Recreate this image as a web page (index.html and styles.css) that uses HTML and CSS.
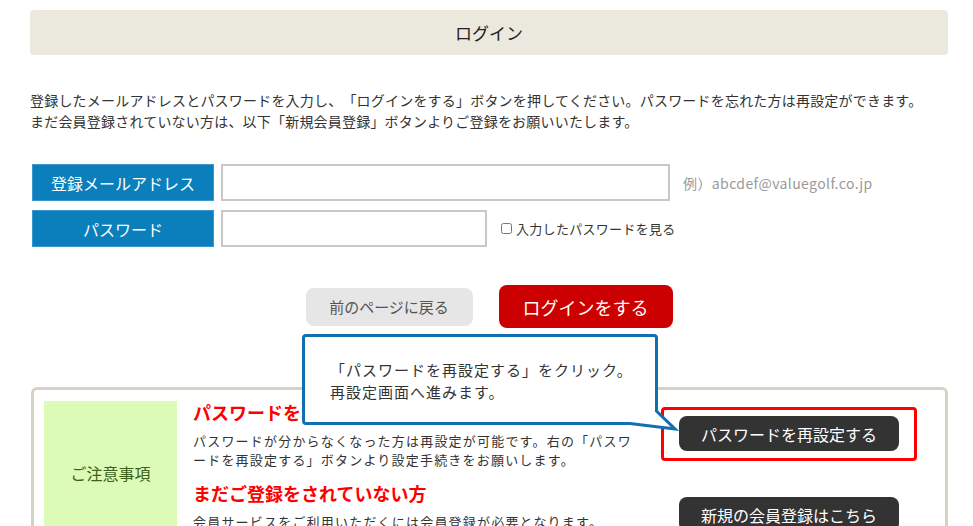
FILE: index.html
```html
<!DOCTYPE html>
<html>
  <head>
    <meta charset="utf-8">
    <title>ログイン</title>
    <link rel="stylesheet" href="styles.css">
  </head>
  <body>
    <div class="page">
      <h1 class="title">ログイン</h1>
      <p class="intro">
        登録したメールアドレスとパスワードを入力し、「ログインをする」ボタンを押してください。パスワードを忘れた方は再設定ができます。<br>
        まだ会員登録されていない方は、以下「新規会員登録」ボタンよりご登録をお願いいたします。
      </p>
      <form class="login">
        <div class="row">
          <label class="label">登録メールアドレス</label>
          <input class="field field-mail" type="text">
          <span class="hint">例）abcdef@valuegolf.co.jp</span>
        </div>
        <div class="row">
          <label class="label">パスワード</label>
          <input class="field field-pass" type="password">
          <label class="show"><input type="checkbox">入力したパスワードを見る</label>
        </div>
        <div class="actions">
          <button type="button" class="btn-back">前のページに戻る</button>
          <button type="button" class="btn-login">ログインをする</button>
        </div>
      </form>
      <div class="notice">
        <div class="notice-title">ご注意事項</div>
        <div class="notice-main">
          <div class="sec">
            <div class="sec-text">
              <h2>パスワードをお忘れの方</h2>
              <p>パスワードが分からなくなった方は再設定が可能です。右の「パスワードを再設定する」ボタンより設定手続きをお願いします。</p>
            </div>
            <div class="frame frame-hl">
              <button type="button" class="btn-dark">パスワードを再設定する</button>
            </div>
          </div>
          <div class="sec">
            <div class="sec-text">
              <h2>まだご登録をされていない方</h2>
              <p>会員サービスをご利用いただくには会員登録が必要となります。</p>
            </div>
            <div class="frame">
              <button type="button" class="btn-dark">新規の会員登録はこちら</button>
            </div>
          </div>
        </div>
      </div>
      <div class="callout">
        「パスワードを再設定する」をクリック。<br>
        再設定画面へ進みます。
        <svg class="callout-tail" width="50" height="32" viewBox="0 0 50 32">
          <polygon points="0,0 26.5,0 26.5,11 45,29 0,23.5" fill="#fff"/>
          <polyline points="26.5,0 26.5,11 45,29 0,23.5" fill="none" stroke="#1170b0" stroke-width="3"/>
        </svg>
      </div>
    </div>
  </body>
</html>
```

FILE: styles.css
```css
body {
  margin: 0;
  background: #fff;
  color: #333;
  font-family: "Noto Sans CJK JP", "Noto Sans", sans-serif;
  text-spacing-trim: space-all;
}

.page {
  position: relative;
  margin: 10px 25px 0 30px;
}

.title {
  margin: 0;
  height: 45px;
  line-height: 45px;
  background: #ebe8dd;
  border-radius: 4px;
  text-align: center;
  font-size: 17px;
  font-weight: normal;
  color: #222;
}

.intro {
  margin: 35px 0 0;
  font-size: 14px;
  line-height: 21px;
  letter-spacing: 0.2px;
}

.login {
  margin-top: 32px;
}

.row {
  display: flex;
  align-items: center;
  height: 37px;
}

.row + .row {
  margin-top: 9px;
}

.label {
  box-sizing: border-box;
  width: 182px;
  height: 37px;
  margin-left: 2px;
  display: flex;
  align-items: center;
  justify-content: center;
  background: #0a7fbb;
  border: 1px solid #3a98cc;
  color: #fff;
  font-size: 16px;
}

.field {
  box-sizing: border-box;
  height: 37px;
  margin: 0 0 0 7px;
  padding: 0 8px;
  border: 2px solid #c8c8c8;
  font-size: 14px;
}

.field-mail {
  width: 449px;
}

.field-pass {
  width: 266px;
}

.hint {
  margin-left: 13px;
  color: #999;
  font-size: 14px;
  letter-spacing: 0.4px;
}

.show {
  margin-left: 14px;
  display: flex;
  align-items: center;
  font-size: 13px;
  letter-spacing: 0.3px;
}

.show input {
  width: 11px;
  height: 11px;
  margin: 0 4px 0 0;
}

.actions {
  margin-top: 38px;
  display: flex;
  align-items: center;
  justify-content: center;
  gap: 26px;
}

.btn-back, .btn-login, .btn-dark {
  border: 0;
  border-radius: 8px;
  font-family: inherit;
  padding: 0;
}

.btn-back {
  width: 167px;
  height: 38px;
  background: #e6e6e6;
  color: #555;
  font-size: 15px;
}

.btn-login {
  width: 174px;
  height: 43px;
  background: #cc0000;
  color: #fff;
  font-size: 18px;
}

.notice {
  margin: 59px 0 0 1px;
  padding: 11px 28px 11px 10px;
  display: flex;
  gap: 16px;
  border: 3px solid #d8d2c4;
  border-radius: 6px;
}

.notice-title {
  width: 133px;
  min-height: 144px;
  flex-shrink: 0;
  display: flex;
  align-items: center;
  justify-content: center;
  background: #dbfbb6;
  color: #3f5f1c;
  font-size: 16px;
}

.notice-main {
  flex: 1;
  display: flex;
  flex-direction: column;
  gap: 13.5px;
}

.sec {
  display: flex;
  justify-content: space-between;
  align-items: flex-start;
}

.sec-text {
  width: 440px;
}

.sec h2 {
  margin: 0;
  font-size: 18px;
  line-height: 22px;
  color: #ff0000;
}

.sec p {
  margin: 7.5px 0 0;
  font-size: 13px;
  line-height: 19px;
  letter-spacing: 1.2px;
}

.frame {
  margin-top: 6px;
  padding: 6px 15px 7px;
  border: 3px solid transparent;
  border-radius: 4px;
}

.frame-hl {
  border-color: #ff0000;
}

.btn-dark {
  width: 220px;
  height: 35px;
  background: #333;
  color: #fff;
  font-size: 16px;
}

.callout {
  position: absolute;
  left: 272px;
  top: 324px;
  z-index: 2;
  box-sizing: border-box;
  width: 356px;
  height: 91px;
  padding: 22px 0 0 25px;
  background: #fff;
  border: 3px solid #1170b0;
  border-radius: 4px;
  font-size: 15px;
  line-height: 22px;
  letter-spacing: 1px;
  color: #333;
}

.callout-tail {
  position: absolute;
  left: 325px;
  top: 63px;
  overflow: visible;
}
```
